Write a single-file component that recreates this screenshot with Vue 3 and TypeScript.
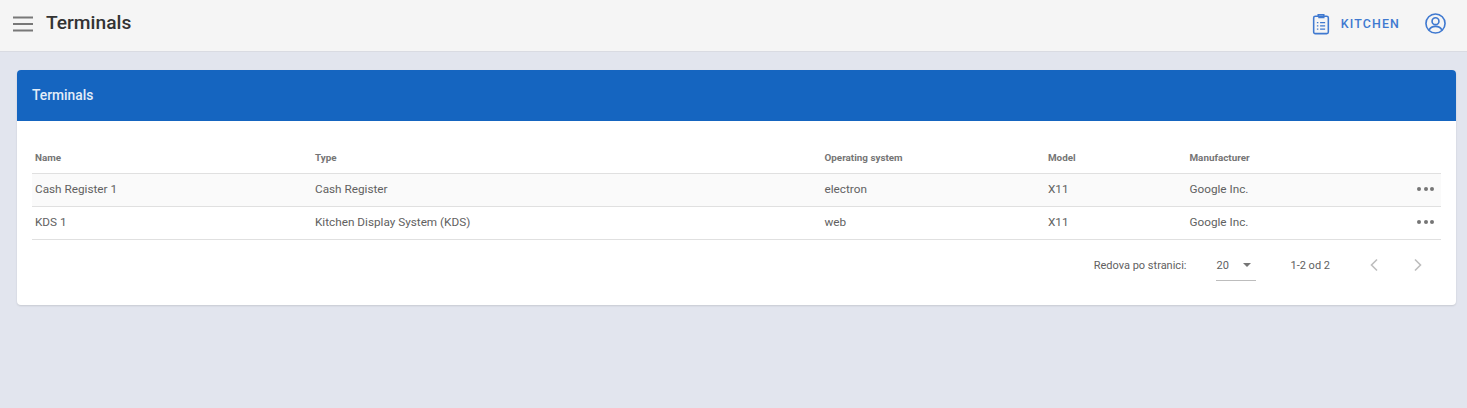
<script setup lang="ts">
const columns = [
  { key: 'name', label: 'Name' },
  { key: 'type', label: 'Type' },
  { key: 'os', label: 'Operating system' },
  { key: 'model', label: 'Model' },
  { key: 'maker', label: 'Manufacturer' },
]
const rows = [
  { name: 'Cash Register 1', type: 'Cash Register', os: 'electron', model: 'X11', maker: 'Google Inc.' },
  { name: 'KDS 1', type: 'Kitchen Display System (KDS)', os: 'web', model: 'X11', maker: 'Google Inc.' },
]
</script>

<template>
  <div class="page">
    <header class="topbar">
      <svg class="menu" viewBox="0 0 20 16" width="20" height="16">
        <path d="M0 1.5h20M0 8h20M0 14.5h20" stroke="#787878" stroke-width="2.2" fill="none" />
      </svg>
      <h1 class="title">Terminals</h1>
      <div class="spacer"></div>
      <div class="kitchen">
        <svg viewBox="0 0 18 24" width="18" height="22" fill="none" stroke="#3f79d0" stroke-width="1.7">
          <rect x="1" y="3.5" width="16" height="19" rx="1.8" />
          <path d="M6 3.5V2h6v1.5M6 5h6V3.5" />
          <path d="M4.5 10.5h1.6M4.5 14h1.6M4.5 17.5h1.6M8 10.5h5.5M8 14h5.5M8 17.5h5.5" stroke-width="1.3" />
        </svg>
        <span class="kitchen-label">KITCHEN</span>
      </div>
      <svg class="user" viewBox="0 0 22 22" width="21" height="21" fill="none" stroke="#3f79d0" stroke-width="1.7">
        <circle cx="11" cy="11" r="10" />
        <circle cx="11" cy="8.6" r="3.6" />
        <path d="M4.4 17.6c1.2-2.5 3.6-3.6 6.6-3.6s5.4 1.1 6.6 3.6" />
      </svg>
    </header>

    <main class="content">
      <section class="card">
        <div class="card-head">Terminals</div>
        <div class="card-body">
          <div class="grid head-row">
            <div v-for="c in columns" :key="c.key" class="cell">{{ c.label }}</div>
            <div></div>
          </div>
          <div v-for="(r, i) in rows" :key="r.name" class="grid row" :class="{ shaded: i === 0 }">
            <div class="cell">{{ r.name }}</div>
            <div class="cell">{{ r.type }}</div>
            <div class="cell">{{ r.os }}</div>
            <div class="cell">{{ r.model }}</div>
            <div class="cell">{{ r.maker }}</div>
            <div class="dots"><i></i><i></i><i></i></div>
          </div>
          <div class="pager">
            <span class="pager-label">Redova po stranici:</span>
            <div class="select">
              <span>20</span>
              <span class="caret"></span>
            </div>
            <span class="range">1-2 od 2</span>
            <svg class="chev" viewBox="0 0 10 14" width="10" height="14" fill="none" stroke="#bdbdbd" stroke-width="1.6">
              <path d="M8 1.5 2.5 7 8 12.5" />
            </svg>
            <svg class="chev" viewBox="0 0 10 14" width="10" height="14" fill="none" stroke="#bdbdbd" stroke-width="1.6">
              <path d="M2 1.5 7.5 7 2 12.5" />
            </svg>
          </div>
        </div>
      </section>
    </main>
  </div>
</template>

<style>
html, body { margin: 0; background: #e2e5ee; }
</style>

<style scoped>
.page {
  height: 408px;
  overflow: hidden;
  background: #e2e5ee;
  font-family: Roboto, "Liberation Sans", sans-serif;
  color: #616161;
}
.topbar {
  height: 47px;
  display: flex;
  align-items: center;
  background: #f5f5f5;
  border-bottom: 1px solid #d9dbe2;
  padding: 0 21px 4px 13px;
}
.menu { margin-right: 13px; }
.title {
  margin: -1px 0 0;
  font-size: 19.2px;
  font-weight: 500;
  color: #333;
  line-height: 1;
}
.spacer { flex: 1; }
.kitchen { display: flex; align-items: center; gap: 11px; margin-right: 25px; }
.kitchen-label {
  color: #3f79d0;
  font-size: 12.4px;
  font-weight: 500;
  letter-spacing: 1.15px;
}
.content { padding: 18px 11px 0 17px; }
.card {
  background: #fff;
  border-radius: 4px;
  overflow: hidden;
  box-shadow: 0 1px 2px rgba(0, 0, 0, 0.12);
}
.card-head {
  height: 51px;
  display: flex;
  align-items: center;
  padding: 0 0 2px 15px;
  box-sizing: border-box;
  background: #1565c0;
  color: #e3edf9;
  font-size: 13.8px;
  font-weight: 500;
}
.card-body { padding: 20px 15px 0; height: 184px; box-sizing: border-box; }
.grid {
  display: grid;
  grid-template-columns: 280px 509.5px 223.5px 141.5px 1fr 40px;
  align-items: center;
  font-size: 11.75px;
}
.cell { padding-left: 3px; white-space: nowrap; }
.head-row {
  height: 32px;
  font-size: 9.85px;
  font-weight: 700;
  color: #757575;
  border-bottom: 1px solid #e0e0e0;
}
.row {
  height: 30px;
  padding-bottom: 2px;
  border-bottom: 1px solid #e0e0e0;
  color: #616161;
}
.shaded { background: #fafafa; }
.dots { display: flex; justify-content: flex-end; gap: 2.5px; padding-right: 7px; }
.dots i { width: 4px; height: 4px; border-radius: 50%; background: #757575; }
.pager { display: flex; align-items: center; height: 50px; justify-content: flex-end; font-size: 11px; color: #616161; }
.pager-label { margin-right: 30px; }
.select {
  width: 40px;
  height: 30px;
  box-sizing: border-box;
  display: flex;
  align-items: center;
  justify-content: space-between;
  border-bottom: 1px solid #bdbdbd;
  margin-right: 34px;
  margin-top: 1px;
  padding-right: 5px;
}
.caret { width: 0; height: 0; border: 4.5px solid transparent; border-top: 4.5px solid #757575; border-bottom: 0; }
.range { margin-right: 39px; }
.chev { margin-right: 34px; }
.chev:last-child { margin-right: 18px; }
</style>
